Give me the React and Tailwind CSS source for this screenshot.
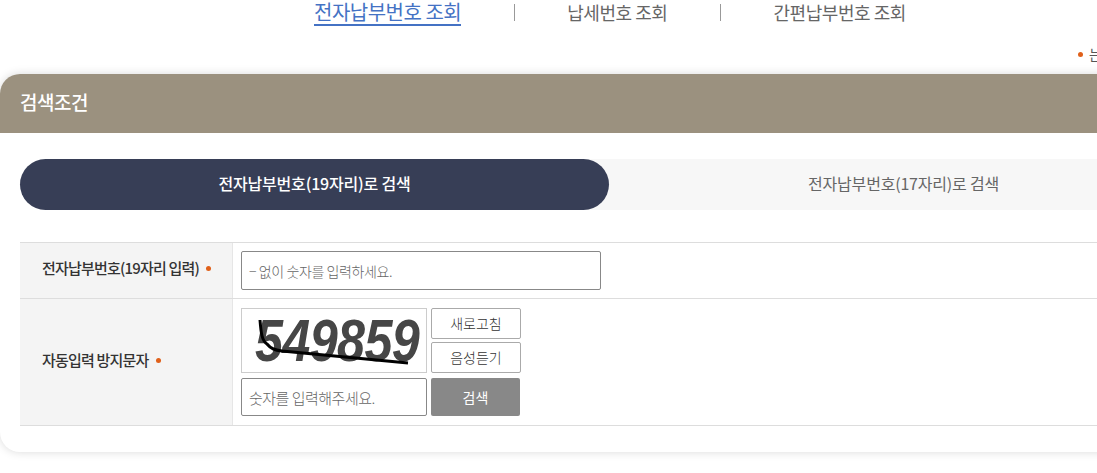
const font = { fontFamily: '"Noto Sans CJK KR", "Noto Sans", sans-serif' }

const Dot = ({ className }) => (
  <span className={`inline-block w-[5px] h-[5px] rounded-full bg-[#e0601a] ${className}`}></span>
)

const Nav = () => (
  <div className="h-[44px] flex items-start text-[18px] leading-[24px] text-[#666] tracking-[-0.45px]">
    <div className="w-[314px] shrink-0"></div>
    <a className="h-[26px] border-b-2 border-[#4472c4] text-[#4472c4] text-[20px] tracking-[-0.5px] whitespace-nowrap">전자납부번호 조회</a>
    <div className="w-[54px] shrink-0 flex justify-end">
      <span className="w-px h-[17px] mt-[4px] bg-[#999]"></span>
    </div>
    <span className="ml-[52px] whitespace-nowrap">납세번호 조회</span>
    <div className="w-[54px] shrink-0 flex justify-end">
      <span className="w-px h-[17px] mt-[4px] bg-[#999]"></span>
    </div>
    <span className="ml-[52px] whitespace-nowrap">간편납부번호 조회</span>
  </div>
)

const Captcha = () => (
  <svg width="184" height="63" viewBox="0 0 184 63">
    <text transform="translate(13 52) scale(0.84 1)" fontFamily="Liberation Sans, sans-serif" fontSize="60" fontWeight="700" fontStyle="italic" fill="#464646">549859</text>
    <path d="M18 11 C19 24 20 32 25 35 C29 40 33 41 40 42 L166 54" fill="none" stroke="#000" strokeWidth="3" />
  </svg>
)

export default function App() {
  return (
    <div style={font} className="w-[1097px] h-[473px] overflow-hidden bg-white">
      <Nav />
      <div className="h-[10px] flex text-[14px] leading-[20px] text-[#555]">
        <div className="w-[1083px] shrink-0 flex justify-end items-center h-[20px]">
          <Dot />
        </div>
        <span className="ml-[6px] whitespace-nowrap">는</span>
      </div>
      <div className="mt-[20px] w-[1220px] h-[378px] rounded-[20px] bg-white shadow-[0_0_10px_rgba(0,0,0,0.15)] overflow-hidden">
        <div className="h-[59px] bg-[#9b917f] pl-[20px] pb-[2px] flex items-center text-white text-[19px] font-medium tracking-[-0.5px]">
          검색조건
        </div>
        <div className="px-[20px] pt-[26px]">
          <div className="flex h-[51px] w-[1178px] bg-[#f7f7f7] rounded-full text-[16px] tracking-[-0.2px]">
            <div className="w-[589px] rounded-full bg-[#373e56] text-white font-medium flex items-center justify-center pb-[4px]">
              전자납부번호(19자리)로 검색
            </div>
            <div className="w-[589px] text-[#666] flex items-center justify-center pb-[4px]">
              전자납부번호(17자리)로 검색
            </div>
          </div>
          <div className="mt-[32px] w-[1178px] border-t border-b border-[#ddd] text-[15px] tracking-[-0.8px] text-[#333]">
            <div className="flex h-[56px] border-b border-[#ddd]">
              <div className="w-[213px] shrink-0 bg-[#f4f4f4] border-r border-[#e6e6e6] pl-[22px] pb-[4px] flex items-center font-medium">
                전자납부번호(19자리 입력)
                <Dot className="ml-[7px]" />
              </div>
              <div className="pl-[8px] pt-[8px]">
                <input placeholder="− 없이 숫자를 입력하세요." className="w-[360px] h-[39px] border border-[#888] rounded-[2px] px-[7px] text-[14px] tracking-[-0.4px] font-light placeholder:text-[#666]" />
              </div>
            </div>
            <div className="flex h-[126px]">
              <div className="w-[213px] shrink-0 bg-[#f4f4f4] border-r border-[#e6e6e6] pl-[22px] pb-[4px] flex items-center font-medium">
                자동입력 방지문자
                <Dot className="ml-[7px]" />
              </div>
              <div className="pl-[8px] pt-[9px] flex flex-col gap-[5px]">
                <div className="flex gap-[4px]">
                  <div className="w-[186px] h-[65px] border border-[#ccc]">
                    <Captcha />
                  </div>
                  <div className="flex flex-col gap-[3px]">
                    <button className="w-[90px] h-[31px] border border-[#aaa] rounded-[2px] text-[14px] tracking-[0] font-light text-[#333]">새로고침</button>
                    <button className="w-[90px] h-[31px] border border-[#aaa] rounded-[2px] text-[14px] tracking-[0] font-light text-[#333]">음성듣기</button>
                  </div>
                </div>
                <div className="flex gap-[4px]">
                  <input placeholder="숫자를 입력해주세요." className="w-[186px] h-[38px] border border-[#888] rounded-[2px] px-[7px] text-[15px] tracking-[-0.5px] font-light placeholder:text-[#666]" />
                  <button className="w-[89px] h-[38px] bg-[#888] rounded-[2px] text-white text-[14px] tracking-[0]">검색</button>
                </div>
              </div>
            </div>
          </div>
        </div>
      </div>
    </div>
  )
}
